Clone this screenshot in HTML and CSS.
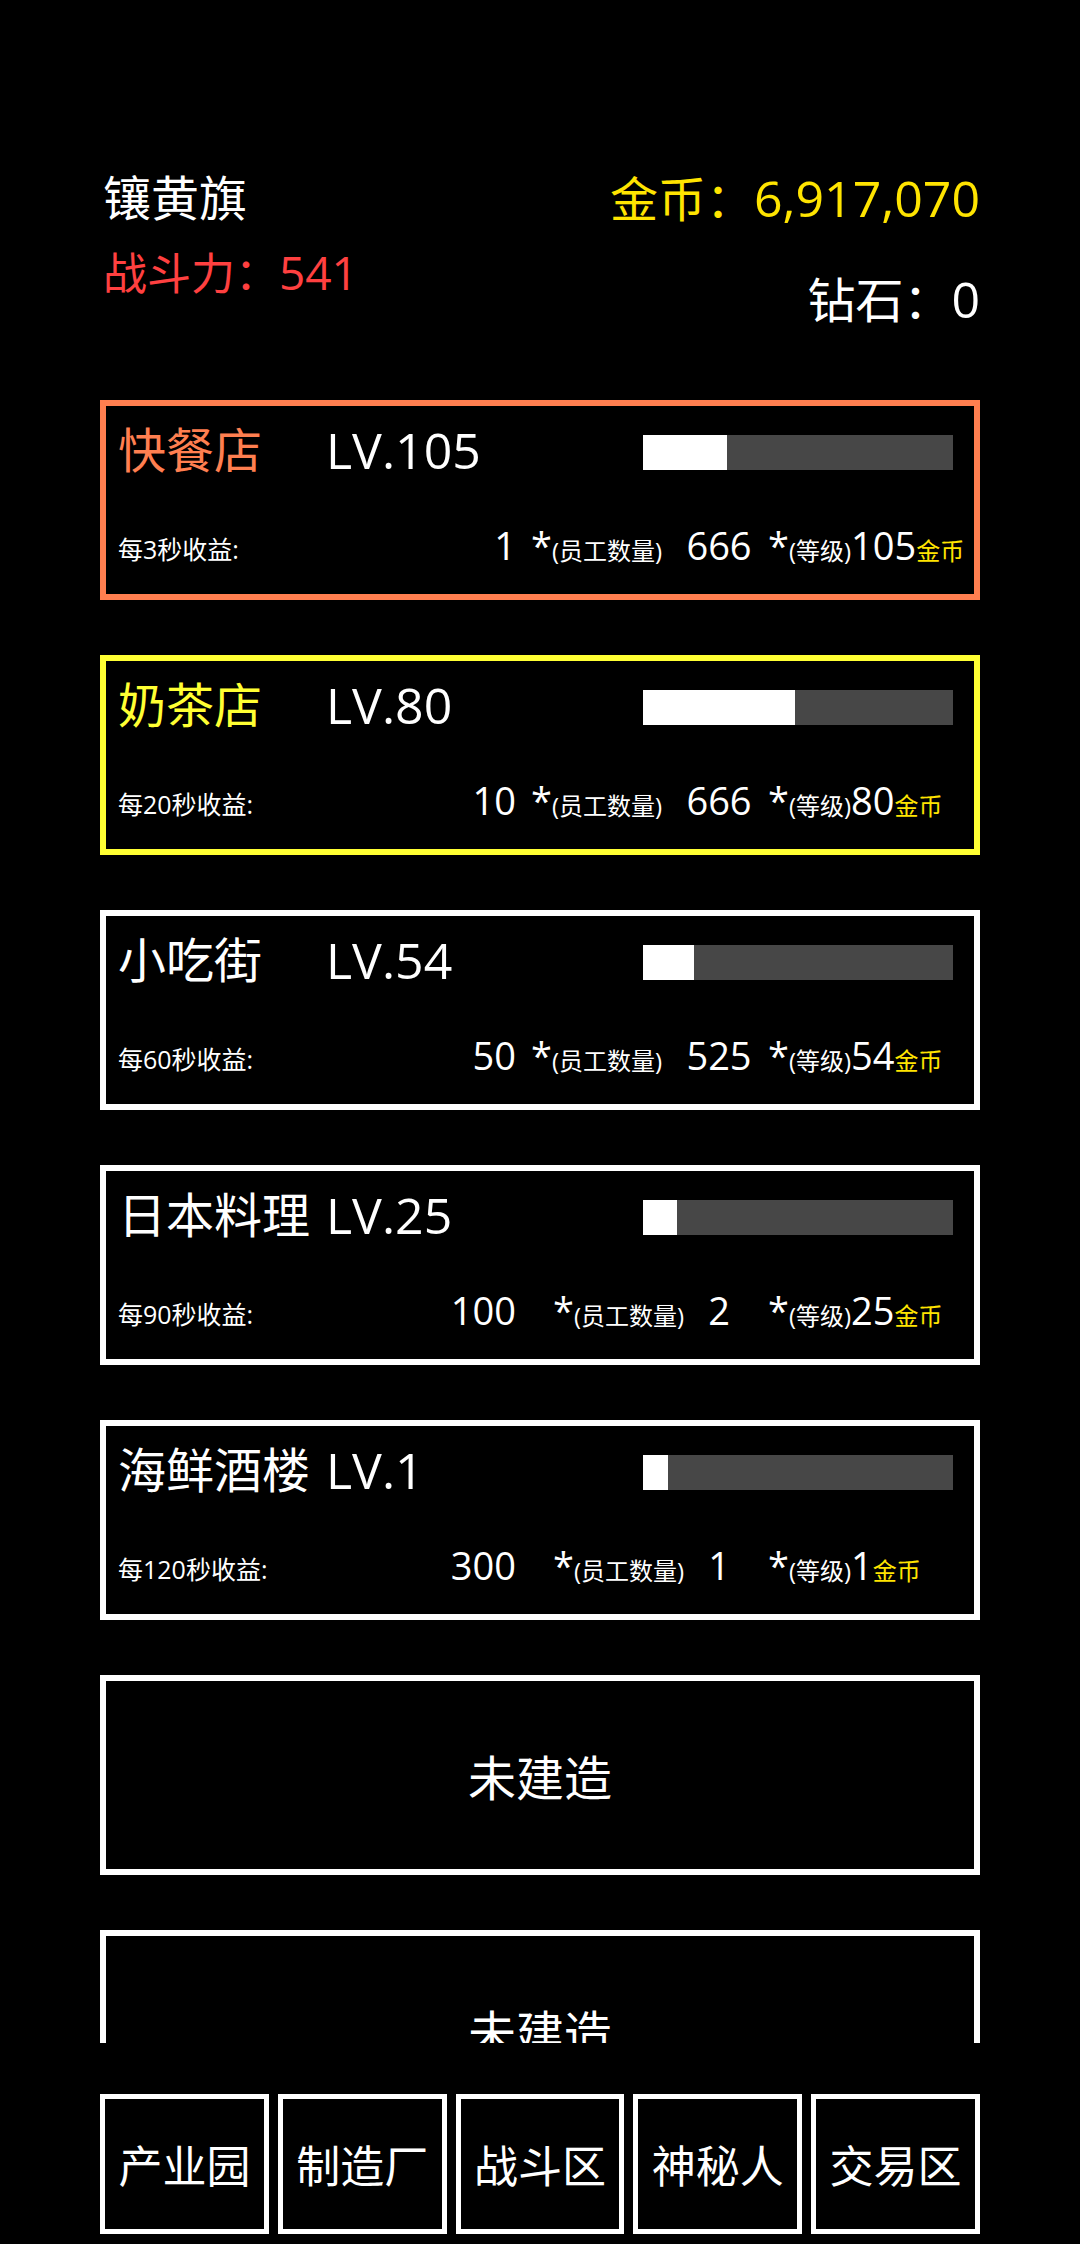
FILE: index.html
```html
<!DOCTYPE html>
<html lang="zh-CN">
<head>
  <meta charset="UTF-8">
  <title>产业园</title>
  <link rel="stylesheet" href="styles.css">
</head>

<body>
  <div class="page">
    <div class="header">
      <div class="player">
        <div class="player-name">镶黄旗</div>
        <div class="power">战斗力：<span class="value">541</span></div>
      </div>
      <div class="wealth">
        <div class="gold">金币：<span class="value">6,917,070</span></div>
        <div class="diamond">钻石：<span class="value">0</span></div>
      </div>
    </div>

    <div class="shop-list">
      <div class="shop fast">
        <div class="shop-top">
          <span class="shop-name">快餐店</span>
          <span class="shop-level">LV.105</span>
          <div class="progress"><div class="progress-fill" style="width: 27%"></div></div>
        </div>
        <div class="income">
          <span class="income-label">每3秒收益:</span>
          <div class="formula">
            <span class="base">1</span>
            <span class="staff">*<small>(员工数量)</small></span>
            <span class="count">666</span>
            <span class="rest">*<small>(等级)</small>105<small class="coin">金币</small></span>
          </div>
        </div>
      </div>

      <div class="shop tea">
        <div class="shop-top">
          <span class="shop-name">奶茶店</span>
          <span class="shop-level">LV.80</span>
          <div class="progress"><div class="progress-fill" style="width: 49%"></div></div>
        </div>
        <div class="income">
          <span class="income-label">每20秒收益:</span>
          <div class="formula">
            <span class="base">10</span>
            <span class="staff">*<small>(员工数量)</small></span>
            <span class="count">666</span>
            <span class="rest">*<small>(等级)</small>80<small class="coin">金币</small></span>
          </div>
        </div>
      </div>

      <div class="shop">
        <div class="shop-top">
          <span class="shop-name">小吃街</span>
          <span class="shop-level">LV.54</span>
          <div class="progress"><div class="progress-fill" style="width: 16.6%"></div></div>
        </div>
        <div class="income">
          <span class="income-label">每60秒收益:</span>
          <div class="formula">
            <span class="base">50</span>
            <span class="staff">*<small>(员工数量)</small></span>
            <span class="count">525</span>
            <span class="rest">*<small>(等级)</small>54<small class="coin">金币</small></span>
          </div>
        </div>
      </div>

      <div class="shop">
        <div class="shop-top">
          <span class="shop-name">日本料理</span>
          <span class="shop-level">LV.25</span>
          <div class="progress"><div class="progress-fill" style="width: 11%"></div></div>
        </div>
        <div class="income">
          <span class="income-label">每90秒收益:</span>
          <div class="formula">
            <span class="base">100</span>
            <span class="staff wide">*<small>(员工数量)</small></span>
            <span class="count">2</span>
            <span class="rest">*<small>(等级)</small>25<small class="coin">金币</small></span>
          </div>
        </div>
      </div>

      <div class="shop">
        <div class="shop-top">
          <span class="shop-name">海鲜酒楼</span>
          <span class="shop-level">LV.1</span>
          <div class="progress"><div class="progress-fill" style="width: 8%"></div></div>
        </div>
        <div class="income">
          <span class="income-label">每120秒收益:</span>
          <div class="formula">
            <span class="base">300</span>
            <span class="staff wide">*<small>(员工数量)</small></span>
            <span class="count">1</span>
            <span class="rest">*<small>(等级)</small>1<small class="coin">金币</small></span>
          </div>
        </div>
      </div>

      <div class="shop empty">未建造</div>
      <div class="shop empty">未建造</div>
    </div>

    <div class="nav">
      <div class="nav-item">产业园</div>
      <div class="nav-item">制造厂</div>
      <div class="nav-item">战斗区</div>
      <div class="nav-item">神秘人</div>
      <div class="nav-item">交易区</div>
    </div>
  </div>
</body>
</html>
```

FILE: styles.css
```css
body {
  margin: 0;
  background-color: #000;
  color: #fff;
  font-family: "Open Sans", "Noto Sans CJK SC", sans-serif;
}

.page {
  width: 880px;
  margin: 0 auto;
  padding-top: 168px;
}

/* cabecera */
.header {
  display: flex;
  justify-content: space-between;
  height: 232px;
}

.player-name {
  font-size: 48px;
  line-height: 60px;
  padding-left: 3px;
}

.power {
  color: #ff4040;
  font-size: 44px;
  line-height: 50px;
  margin-top: 19px;
  padding-left: 3px;
}

.power .value {
  font-size: 46px;
}

.wealth {
  text-align: right;
}

.gold {
  color: #ffe400;
  font-size: 48px;
  line-height: 60px;
}

.gold .value,
.diamond .value {
  font-size: 50px;
}

.diamond {
  font-size: 48px;
  line-height: 60px;
  margin-top: 40px;
}

/* lista de tiendas */
.shop-list {
  display: flex;
  flex-direction: column;
  gap: 55px;
  height: 1643px;
  overflow: hidden;
}

.shop {
  flex: none;
  height: 200px;
  box-sizing: border-box;
  border: 6px solid #fff;
  padding: 14px 21px 0 12px;
}

.shop.fast {
  border-color: #ff7f50;
}

.shop.fast .shop-name {
  color: #ff7f50;
}

.shop.tea {
  border-color: #ffff33;
}

.shop.tea .shop-name {
  color: #ffff33;
}

.shop-top {
  display: flex;
  align-items: center;
  height: 60px;
}

.shop-name {
  flex: none;
  width: 208px;
  font-size: 48px;
  line-height: 60px;
  white-space: nowrap;
}

.shop-level {
  font-size: 50px;
  line-height: 60px;
}

.progress {
  flex: none;
  margin-left: auto;
  margin-top: 4px;
  width: 310px;
  height: 35px;
  background-color: #474747;
}

.progress-fill {
  height: 100%;
  background-color: #fff;
}

.income {
  display: flex;
  align-items: center;
  height: 50px;
  margin-top: 43px;
}

.income-label {
  flex: none;
  width: 282px;
  font-size: 25px;
  white-space: nowrap;
}

.formula {
  display: flex;
  align-items: baseline;
  font-size: 38px;
  line-height: 50px;
  white-space: nowrap;
}

.formula > span {
  flex: none;
}

.formula small {
  font-size: 24px;
}

.base {
  width: 116px;
  text-align: right;
}

.staff {
  width: 154px;
  box-sizing: border-box;
  padding-left: 15px;
}

.staff.wide {
  padding-left: 37px;
}

.count {
  width: 98px;
  text-align: center;
}

.formula .coin {
  color: #ffe400;
}

.shop.empty {
  display: flex;
  align-items: center;
  justify-content: center;
  padding: 0;
  font-size: 48px;
}

/* menú inferior */
.nav {
  display: flex;
  gap: 9px;
  margin-top: 51px;
}

.nav-item {
  flex: 1;
  height: 140px;
  box-sizing: border-box;
  border: 5px solid #fff;
  display: flex;
  align-items: center;
  justify-content: center;
  font-size: 44px;
}
```
